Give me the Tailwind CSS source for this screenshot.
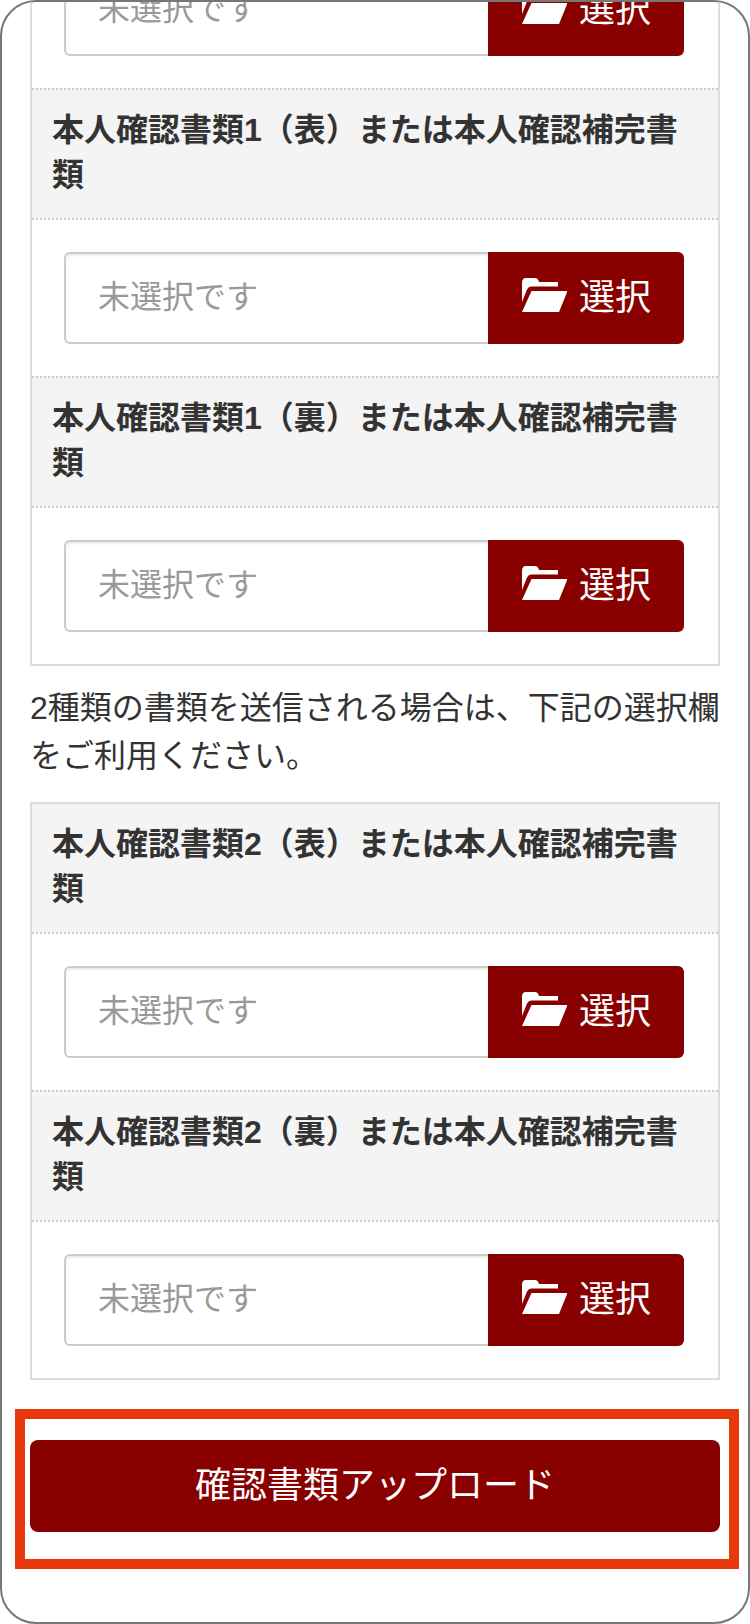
<!DOCTYPE html>
<html lang="ja">
<head>
    <meta charset="UTF-8">
    <meta name="viewport" content="width=device-width, initial-scale=1.0">
    <title>確認書類アップロード</title>
    <script src="https://cdn.jsdelivr.net/npm/@tailwindcss/browser@4"></script>
</head>
<body class="bg-white">
    <div class="w-[750px] h-[1624px] border-2 border-[#777] rounded-[36px] overflow-hidden bg-white text-[#333] text-[32px] font-['Liberation_Sans','Noto_Sans_CJK_JP',sans-serif]">
        <div class="-mt-[38px] ml-[28px] w-[690px]">
            <!-- first table, scrolled off the top -->
            <div class="border-2 border-t-0 border-[#ddd]">
                <div class="pl-[32px] pr-[34px] pb-[32px]">
                    <div class="flex h-[92px]">
                        <div class="flex-1 flex items-center pl-[32px] pb-[3px] border-2 border-r-0 border-[#ccc] rounded-l-[6px] shadow-[inset_0_2px_2px_rgba(0,0,0,0.075)] text-[#999]">未選択です</div>
                        <div class="w-[196px] flex items-center justify-center gap-[12px] bg-[#880000] rounded-r-[6px] text-white text-[36px]">
                            <svg class="w-[45px] h-[34px] ml-[1px] -mt-[6px]" viewBox="0 0 45 34" fill="#fff"><path d="M0 5Q0 0 4 0H13Q16 0 17 4H36V8.500H9Q6.500 8.500 5 11.500L0 24ZM9.500 13H45.500L37 34H0Z"/></svg>
                            <span>選択</span>
                        </div>
                    </div>
                </div>
                <div class="border-t-2 border-dotted border-[#ccc] bg-[#f4f4f4] px-[20px] pt-[18px] pb-[20px] font-bold leading-[45px]">本人確認書類1（表）または本人確認補完書類</div>
                <div class="border-t-2 border-dotted border-[#ccc] pl-[32px] pr-[34px] py-[32px]">
                    <div class="flex h-[92px]">
                        <div class="flex-1 flex items-center pl-[32px] pb-[3px] border-2 border-r-0 border-[#ccc] rounded-l-[6px] shadow-[inset_0_2px_2px_rgba(0,0,0,0.075)] text-[#999]">未選択です</div>
                        <div class="w-[196px] flex items-center justify-center gap-[12px] bg-[#880000] rounded-r-[6px] text-white text-[36px]">
                            <svg class="w-[45px] h-[34px] ml-[1px] -mt-[6px]" viewBox="0 0 45 34" fill="#fff"><path d="M0 5Q0 0 4 0H13Q16 0 17 4H36V8.500H9Q6.500 8.500 5 11.500L0 24ZM9.500 13H45.500L37 34H0Z"/></svg>
                            <span>選択</span>
                        </div>
                    </div>
                </div>
                <div class="border-t-2 border-dotted border-[#ccc] bg-[#f4f4f4] px-[20px] pt-[18px] pb-[20px] font-bold leading-[45px]">本人確認書類1（裏）または本人確認補完書類</div>
                <div class="border-t-2 border-dotted border-[#ccc] pl-[32px] pr-[34px] py-[32px]">
                    <div class="flex h-[92px]">
                        <div class="flex-1 flex items-center pl-[32px] pb-[3px] border-2 border-r-0 border-[#ccc] rounded-l-[6px] shadow-[inset_0_2px_2px_rgba(0,0,0,0.075)] text-[#999]">未選択です</div>
                        <div class="w-[196px] flex items-center justify-center gap-[12px] bg-[#880000] rounded-r-[6px] text-white text-[36px]">
                            <svg class="w-[45px] h-[34px] ml-[1px] -mt-[6px]" viewBox="0 0 45 34" fill="#fff"><path d="M0 5Q0 0 4 0H13Q16 0 17 4H36V8.500H9Q6.500 8.500 5 11.500L0 24ZM9.500 13H45.500L37 34H0Z"/></svg>
                            <span>選択</span>
                        </div>
                    </div>
                </div>
            </div>

            <p class="mt-[18px] mb-[22px] leading-[48px]">2種類の書類を送信される場合は、下記の選択欄をご利用ください。</p>

            <!-- second table -->
            <div class="border-2 border-[#ddd]">
                <div class="bg-[#f4f4f4] px-[20px] pt-[18px] pb-[20px] font-bold leading-[45px]">本人確認書類2（表）または本人確認補完書類</div>
                <div class="border-t-2 border-dotted border-[#ccc] pl-[32px] pr-[34px] py-[32px]">
                    <div class="flex h-[92px]">
                        <div class="flex-1 flex items-center pl-[32px] pb-[3px] border-2 border-r-0 border-[#ccc] rounded-l-[6px] shadow-[inset_0_2px_2px_rgba(0,0,0,0.075)] text-[#999]">未選択です</div>
                        <div class="w-[196px] flex items-center justify-center gap-[12px] bg-[#880000] rounded-r-[6px] text-white text-[36px]">
                            <svg class="w-[45px] h-[34px] ml-[1px] -mt-[6px]" viewBox="0 0 45 34" fill="#fff"><path d="M0 5Q0 0 4 0H13Q16 0 17 4H36V8.500H9Q6.500 8.500 5 11.500L0 24ZM9.500 13H45.500L37 34H0Z"/></svg>
                            <span>選択</span>
                        </div>
                    </div>
                </div>
                <div class="border-t-2 border-dotted border-[#ccc] bg-[#f4f4f4] px-[20px] pt-[18px] pb-[20px] font-bold leading-[45px]">本人確認書類2（裏）または本人確認補完書類</div>
                <div class="border-t-2 border-dotted border-[#ccc] pl-[32px] pr-[34px] py-[32px]">
                    <div class="flex h-[92px]">
                        <div class="flex-1 flex items-center pl-[32px] pb-[3px] border-2 border-r-0 border-[#ccc] rounded-l-[6px] shadow-[inset_0_2px_2px_rgba(0,0,0,0.075)] text-[#999]">未選択です</div>
                        <div class="w-[196px] flex items-center justify-center gap-[12px] bg-[#880000] rounded-r-[6px] text-white text-[36px]">
                            <svg class="w-[45px] h-[34px] ml-[1px] -mt-[6px]" viewBox="0 0 45 34" fill="#fff"><path d="M0 5Q0 0 4 0H13Q16 0 17 4H36V8.500H9Q6.500 8.500 5 11.500L0 24ZM9.500 13H45.500L37 34H0Z"/></svg>
                            <span>選択</span>
                        </div>
                    </div>
                </div>
            </div>

            <div class="relative mt-[60px]">
                <button class="w-full h-[92px] bg-[#880000] rounded-[8px] text-white text-[36px]">確認書類アップロード</button>
                <!-- orange highlight drawn over the button -->
                <div class="absolute -left-[15px] -right-[19px] -top-[31px] -bottom-[37px] border-[10px] border-[#e8380d]"></div>
            </div>
        </div>
    </div>
</body>
</html>
